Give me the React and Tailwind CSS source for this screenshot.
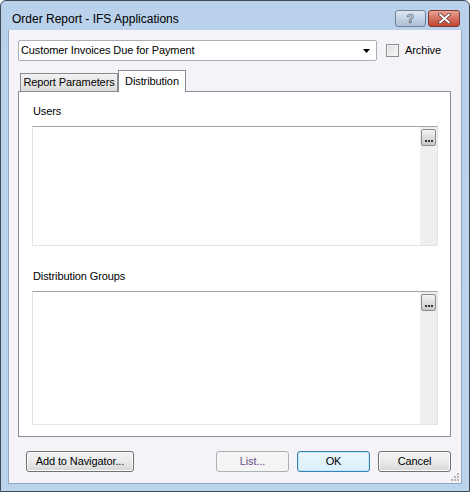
import React from 'react';

const Button = ({ children, className = '', disabled, focused }) => (
  <button
    className={
      'h-[21px] rounded-[3px] border text-[11px] tracking-[-0.1px] leading-none flex items-center justify-center ' +
      (disabled
        ? 'border-[#adb2b5] bg-[#f4f4f4] text-[#6d4d8c] '
        : focused
        ? 'border-[#3c7fb1] bg-gradient-to-b from-[#eaf6fd] to-[#d9f0fc] text-black shadow-[inset_0_0_0_1px_#bfe6fb] '
        : 'border-[#707070] bg-gradient-to-b from-[#f2f2f2] via-[#ebebeb] to-[#d6d6d6] text-black shadow-[inset_0_0_0_1px_#fcfcfc] ') +
      className
    }
  >
    {children}
  </button>
);

const DotsButton = () => (
  <div className="w-[15px] h-[17px] mt-[2px] ml-[1px] rounded-[2px] border border-[#8c8c8c] bg-gradient-to-b from-[#f4f4f4] to-[#c9c9c9] flex items-end justify-center pb-[3px] gap-[1px]">
    <span className="w-[2px] h-[2px] bg-[#333]" />
    <span className="w-[2px] h-[2px] bg-[#333]" />
    <span className="w-[2px] h-[2px] bg-[#333]" />
  </div>
);

const ListBox = ({ height }) => (
  <div
    className="ml-[13px] w-[406px] flex bg-white border border-[#e3e3e3] border-t-[#a5a5a5]"
    style={{ height }}
  >
    <div className="flex-1" />
    <div className="w-[17px] bg-[#efefef]">
      <DotsButton />
    </div>
  </div>
);

const App = () => {
  return (
    <div
      className="w-[470px] h-[492px] bg-gradient-to-b from-[#b9d1ea] to-[#bcd3ec] border border-[#3f4a58] rounded-t-[6px] flex flex-col"
      style={{ fontFamily: '"Liberation Sans", Arial, sans-serif' }}
    >
      {/* Title bar */}
      <div className="h-[29px] flex items-start shrink-0">
        <span className="ml-[11px] mt-[12px] text-[12px] text-black leading-none">Order Report - IFS Applications</span>
        <div className="ml-auto mr-[9px] mt-[9px] flex gap-[2px]">
          <div className="w-[31px] h-[17px] rounded-[3px] border border-[#6e7f97] bg-gradient-to-b from-[#dfe8f3] via-[#c3d3e6] to-[#aebfd6] flex items-center justify-center">
            <span className="text-[12px] font-bold text-white leading-none [-webkit-text-stroke:0.6px_#3b4a60]">?</span>
          </div>
          <div className="w-[32px] h-[17px] rounded-[3px] border border-[#7c3b34] bg-gradient-to-b from-[#e8a597] via-[#d4705f] to-[#c0442f] flex items-center justify-center">
            <svg width="13" height="11" viewBox="0 0 13 11">
              <path d="M2 1.5 L11 9.5 M11 1.5 L2 9.5" stroke="#5a2a24" strokeWidth="3.4" strokeLinecap="round" />
              <path d="M2 1.5 L11 9.5 M11 1.5 L2 9.5" stroke="#ffffff" strokeWidth="2" strokeLinecap="round" />
            </svg>
          </div>
        </div>
      </div>

      {/* Client area */}
      <div className="mx-[7px] h-[454px] bg-[#f6f3f8] border border-[#8fa8c3] border-t-0 flex flex-col text-[11px] tracking-[-0.1px]">
        {/* Report selector */}
        <div className="mt-[10px] ml-[9px] flex items-center">
          <div className="w-[359px] h-[21px] bg-white border border-[#abadb3] rounded-[2px] flex items-center pl-[2px] pr-[5px]">
            <span className="text-black">Customer Invoices Due for Payment</span>
            <svg className="ml-auto" width="8" height="4" viewBox="0 0 8 4">
              <path d="M0 0 H7 L3.5 4 Z" fill="#000" />
            </svg>
          </div>
          <div className="ml-[9px] w-[13px] h-[13px] border border-[#8e8f8f] bg-gradient-to-br from-[#dcdcdc] to-[#f8f8f8] shadow-[inset_0_0_0_1px_#f4f4f4]" />
          <span className="ml-[6px] text-black">Archive</span>
        </div>

        {/* Tabs */}
        <div className="mt-[8px] ml-[9px] flex items-end h-[22px] relative z-10">
          <div className="ml-[2px] w-[98px] h-[18px] border border-b-0 border-[#898c95] bg-gradient-to-b from-[#f2f2f2] to-[#dcdcdc] flex items-center justify-center text-black">
            Report Parameters
          </div>
          <div className="h-[22px] mb-[-1px] w-[68px] border border-b-0 border-[#898c95] bg-white flex items-start justify-center pt-[2px] text-black">
            Distribution
          </div>
        </div>

        {/* Tab panel */}
        <div className="ml-[9px] w-[433px] h-[346px] bg-white border border-[#898c95] flex flex-col">
          <span className="mt-[12px] ml-[14px] text-black leading-[14px]">Users</span>
          <div className="mt-[8px]">
            <ListBox height={120} />
          </div>
          <span className="mt-[23px] ml-[14px] text-black leading-[14px]">Distribution Groups</span>
          <div className="mt-[8px]">
            <ListBox height={134} />
          </div>
        </div>

        {/* Buttons */}
        <div className="mt-[14px] flex items-center">
          <Button className="ml-[17px] w-[108px]">Add to Navigator...</Button>
          <Button disabled className="ml-[82px] w-[73px]">List...</Button>
          <Button focused className="ml-[8px] w-[73px]">OK</Button>
          <Button className="ml-[8px] w-[73px]">Cancel</Button>
        </div>

        {/* Resize grip */}
        <div className="mt-auto ml-auto mr-[2px] mb-[2px] w-[8px] h-[8px] relative">
          <span className="absolute right-0 bottom-0 w-[2px] h-[2px] bg-[#b4b4b4]" />
          <span className="absolute right-[3px] bottom-0 w-[2px] h-[2px] bg-[#b4b4b4]" />
          <span className="absolute right-[6px] bottom-0 w-[2px] h-[2px] bg-[#b4b4b4]" />
          <span className="absolute right-0 bottom-[3px] w-[2px] h-[2px] bg-[#b4b4b4]" />
          <span className="absolute right-[3px] bottom-[3px] w-[2px] h-[2px] bg-[#b4b4b4]" />
          <span className="absolute right-0 bottom-[6px] w-[2px] h-[2px] bg-[#b4b4b4]" />
        </div>
      </div>
    </div>
  );
};

export default App;
